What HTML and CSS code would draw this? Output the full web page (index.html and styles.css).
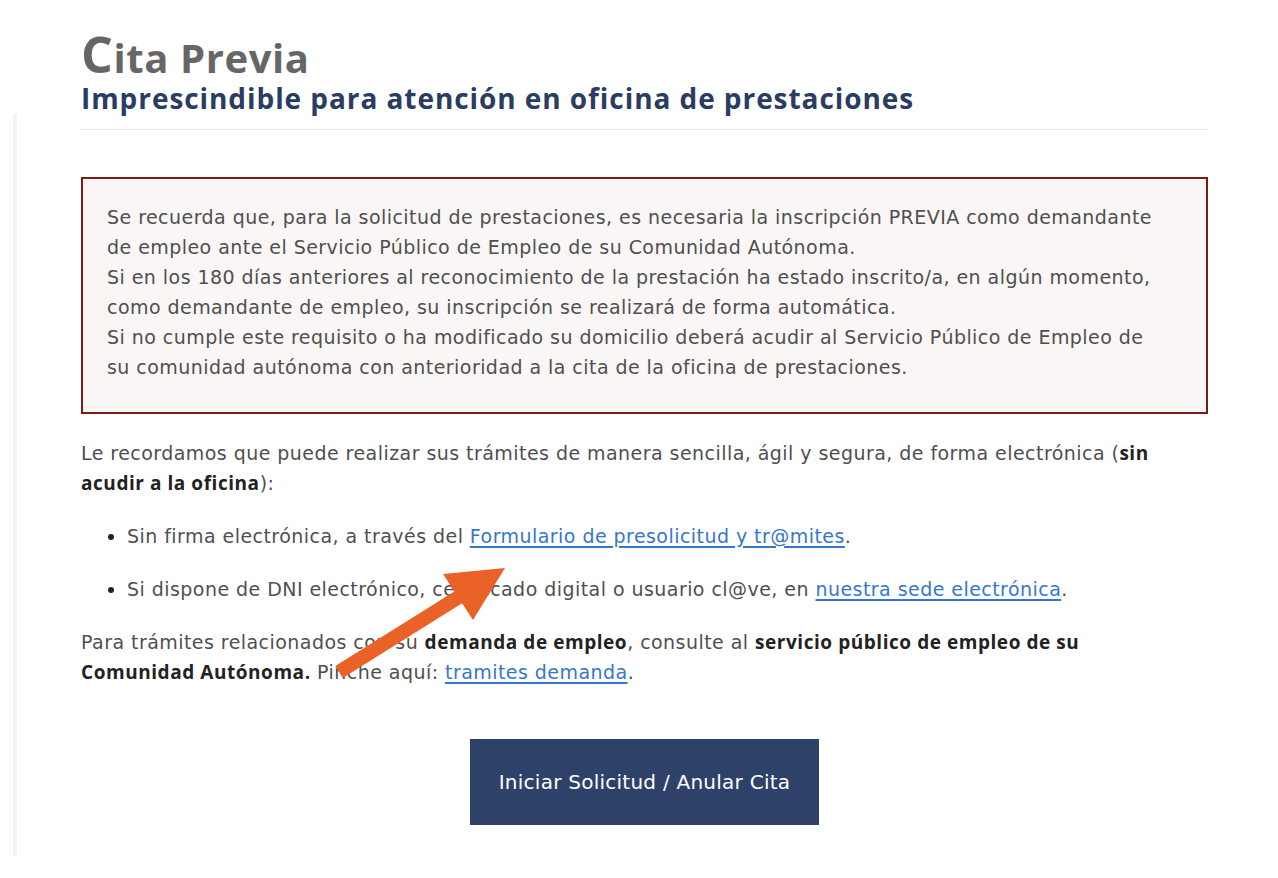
FILE: index.html
```html
<!DOCTYPE html>
<html lang="es">
<head>
<meta charset="utf-8">
<title>Cita Previa</title>
<link rel="stylesheet" href="styles.css">
</head>
<body>
<div class="page">
  <div class="rail"></div>
  <main class="content">
    <h1 class="title"><span class="cap">C</span>ita Previa</h1>
    <h2 class="subtitle">Imprescindible para atención en oficina de prestaciones</h2>
    <hr class="divider">
    <div class="notice">
      <p>Se recuerda que, para la solicitud de prestaciones, es necesaria la inscripción PREVIA como demandante de empleo ante el Servicio Público de Empleo de su Comunidad Autónoma.<br>Si en los 180 días anteriores al reconocimiento de la prestación ha estado inscrito/a, en algún momento, como demandante de empleo, su inscripción se realizará de forma automática.<br>Si no cumple este requisito o ha modificado su domicilio deberá acudir al Servicio Público de Empleo de su comunidad autónoma con anterioridad a la cita de la oficina de prestaciones.</p>
    </div>
    <p class="text">Le recordamos que puede realizar sus trámites de manera sencilla, ágil y segura, de forma electrónica (<strong>sin acudir a la oficina</strong>):</p>
    <ul class="options">
      <li>Sin firma electrónica, a través del <a href="#">Formulario de presolicitud y tr@mites</a>.</li>
      <li>Si dispone de DNI electrónico, certificado digital o usuario cl@ve, en <a href="#">nuestra sede electrónica</a>.</li>
    </ul>
    <p class="text">Para trámites relacionados con su <strong>demanda de empleo</strong>, consulte al <strong>servicio público de empleo de su Comunidad Autónoma.</strong> Pinche aquí: <a href="#">tramites demanda</a>.</p>
    <div class="actions">
      <a class="btn" href="#">Iniciar Solicitud / Anular Cita</a>
    </div>
  </main>
  <svg class="arrow" width="1278" height="878" viewBox="0 0 1278 878" aria-hidden="true">
    <polygon points="335.3,666 342.7,678 465.7,601 458.3,589" fill="#ea6228"/>
    <polygon points="505,568 443,574 473,620" fill="#ea6228"/>
  </svg>
</div>
</body>
</html>
```

FILE: styles.css
```css
html, body {
  margin: 0;
  padding: 0;
  background: #ffffff;
}

body {
  font-family: "DejaVu Sans", "Open Sans", sans-serif;
  color: #4f4f4f;
}

.page {
  position: relative;
  display: flex;
  align-items: flex-start;
  width: 1278px;
  min-height: 878px;
  padding-left: 13px;
  box-sizing: border-box;
}

.rail {
  flex: none;
  width: 4px;
  height: 742px;
  margin-top: 114px;
  background: #f3f3f3;
}

.content {
  flex: none;
  width: 1127px;
  margin-left: 64px;
}

.title {
  margin: 29px 0 0;
  font-family: "Open Sans", sans-serif;
  font-weight: 700;
  font-size: 40px;
  line-height: 1;
  letter-spacing: 0.6px;
  color: #666666;
}

.title .cap {
  font-size: 50px;
  line-height: 1;
}

.subtitle {
  margin: 3px 0 0;
  font-family: "Open Sans", sans-serif;
  font-weight: 700;
  font-size: 28px;
  line-height: 1.2;
  letter-spacing: 0.93px;
  color: #2b3c63;
}

.divider {
  margin: 13px 0 0;
  border: 0;
  border-top: 1px solid #e9e9e9;
  height: 0;
}

.notice {
  margin-top: 47px;
  border: 2px solid #7a1c13;
  background: #faf6f5;
  padding: 23px 41px 30px 24px;
}

.notice p {
  margin: 0;
  font-size: 19px;
  line-height: 30px;
  letter-spacing: 0.45px;
}

.text {
  margin: 24px 0 0;
  padding-right: 30px;
  font-size: 19px;
  line-height: 30px;
  letter-spacing: 0.45px;
}

.text strong {
  font-family: "Open Sans", "DejaVu Sans", sans-serif;
  font-weight: 700;
  letter-spacing: 0.55px;
  color: #222222;
}

.options {
  margin: 23px 0 0;
  padding-left: 46px;
  font-size: 19px;
  line-height: 30px;
  letter-spacing: 0.45px;
}

.options li + li {
  margin-top: 23px;
}

.options li::marker {
  color: #222222;
}

a {
  color: #3577cc;
  text-decoration: underline;
  text-decoration-thickness: 1.5px;
  text-underline-offset: 3px;
}

.options + .text {
  margin-top: 23px;
}

.actions {
  display: flex;
  justify-content: center;
  margin-top: 52px;
}

.btn {
  display: flex;
  align-items: center;
  justify-content: center;
  width: 349px;
  height: 86px;
  background: #2e4169;
  color: #ffffff;
  text-decoration: none;
  font-size: 20px;
  letter-spacing: 0.25px;
}

.arrow {
  position: absolute;
  left: 0;
  top: 0;
  pointer-events: none;
}
```
